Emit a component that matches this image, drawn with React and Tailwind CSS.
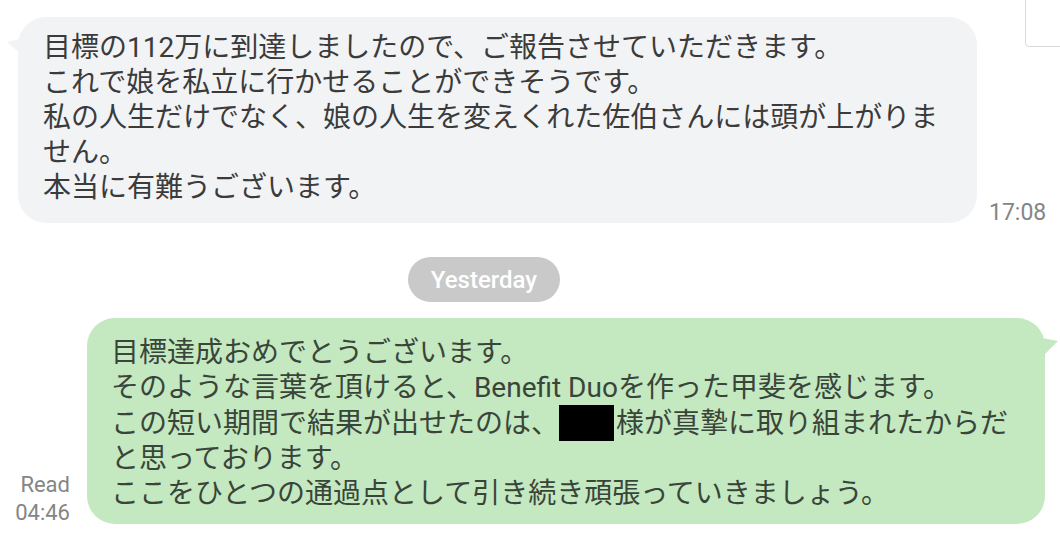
import React from "react";

const font = { fontFamily: '"Roboto", "Noto Sans CJK JP", sans-serif' };

export default function App() {
  return (
    <div
      className="relative w-[1060px] h-[540px] overflow-hidden bg-white"
      style={font}
    >
      {/* partial element at top-right edge */}
      <div className="absolute right-[-10px] top-[-10px] w-[45px] h-[57px] border border-[#d9d9d9] rounded-bl-[4px] bg-white" />

      {/* incoming message */}
      <div className="flex items-end pt-[17px] pl-[18px]">
        <div className="relative w-[959px] h-[206px] rounded-[28px] bg-[#f2f3f5] pl-[25px] pt-[13px] text-[28px] leading-[35px] text-[#3b3b3b]">
          <svg
            className="absolute left-[-11px] top-[20px]"
            width="16"
            height="20"
            viewBox="0 0 16 20"
          >
            <path d="M0 5 L16 1 L16 19 Z" fill="#f2f3f5" />
          </svg>
          <div>目標の112万に到達しましたので、ご報告させていただきます。</div>
          <div>これで娘を私立に行かせることができそうです。</div>
          <div>私の人生だけでなく、娘の人生を変えくれた佐伯さんには頭が上がりま</div>
          <div>せん。</div>
          <div>本当に有難うございます。</div>
        </div>
        <div className="ml-[12px] mb-[-3px] text-[23px] leading-[26px] text-[#858585]">
          17:08
        </div>
      </div>

      {/* date separator */}
      <div className="mt-[34px] ml-[408px] flex h-[45px] w-[152px] items-center justify-center rounded-full bg-[#c9c9c9] text-[24px] font-medium text-white">
        Yesterday
      </div>

      {/* outgoing message */}
      <div className="mt-[16px] flex items-end">
        <div className="w-[70px] mb-[-3px] text-right text-[22px] leading-[28px] text-[#858585]">
          <div>Read</div>
          <div>04:46</div>
        </div>
        <div className="relative ml-[17px] w-[958px] h-[206px] rounded-[28px] bg-[#c4e8c0] pl-[24px] pt-[17px] text-[28px] leading-[35px] text-[#3a453a]">
          <svg
            className="absolute right-[-13px] top-[20px]"
            width="16"
            height="20"
            viewBox="0 0 16 20"
          >
            <path d="M0 0 L16 3 L0 19 Z" fill="#c4e8c0" />
          </svg>
          <div>目標達成おめでとうございます。</div>
          <div>そのような言葉を頂けると、Benefit Duoを作った甲斐を感じます。</div>
          <div className="flex items-center">
            <span>この短い期間で結果が出せたのは、</span>
            <span className="mr-[2px] inline-block h-[36px] w-[55px] bg-black" />
            <span>様が真摯に取り組まれたからだ</span>
          </div>
          <div>と思っております。</div>
          <div>ここをひとつの通過点として引き続き頑張っていきましょう。</div>
        </div>
      </div>
    </div>
  );
}
